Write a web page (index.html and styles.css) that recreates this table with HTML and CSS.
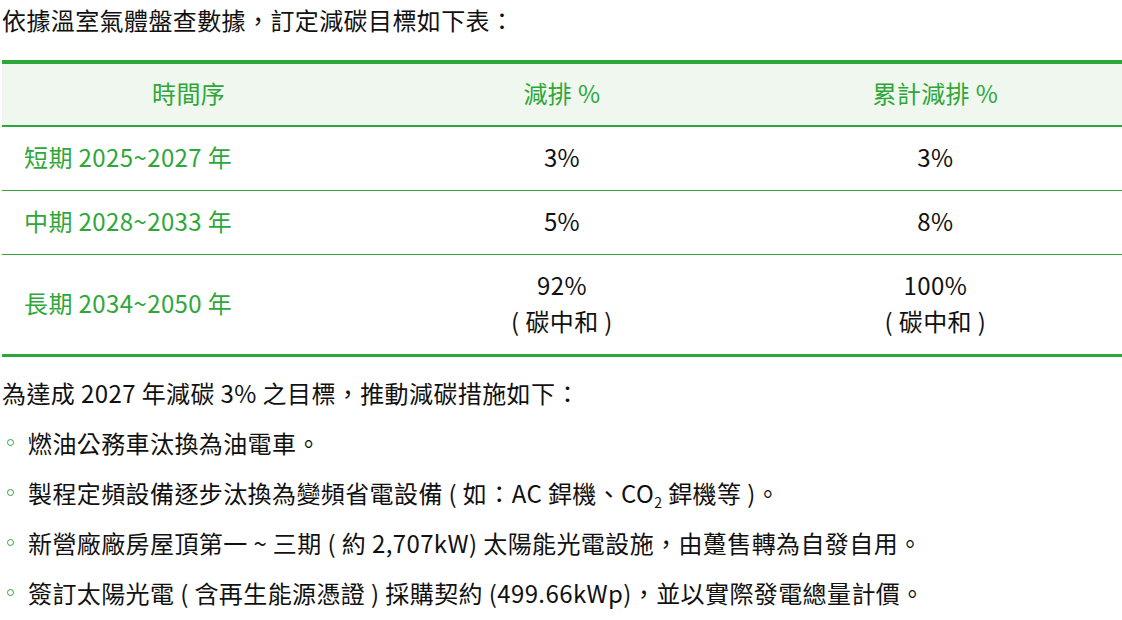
FILE: index.html
```html
<!DOCTYPE html>
<html lang="zh-Hant">
<head>
<meta charset="utf-8">
<link rel="stylesheet" href="styles.css">
</head>
<body>
<div class="content">
  <p class="intro">依據溫室氣體盤查數據，訂定減碳目標如下表：</p>
  <table class="goal-table">
    <thead>
      <tr><th>時間序</th><th>減排 %</th><th>累計減排 %</th></tr>
    </thead>
    <tbody>
      <tr><td class="period">短期 2025~2027 年</td><td>3%</td><td>3%</td></tr>
      <tr><td class="period">中期 2028~2033 年</td><td>5%</td><td>8%</td></tr>
      <tr><td class="period">長期 2034~2050 年</td><td>92%<br>( 碳中和 )</td><td>100%<br>( 碳中和 )</td></tr>
    </tbody>
  </table>
  <p class="lead">為達成 2027 年減碳 3% 之目標，推動減碳措施如下：</p>
  <ul class="measures">
    <li>燃油公務車汰換為油電車。</li>
    <li>製程定頻設備逐步汰換為變頻省電設備 ( 如：AC 銲機、CO<sub>2</sub> 銲機等 )。</li>
    <li>新營廠廠房屋頂第一 ~ 三期 ( 約 2,707kW) 太陽能光電設施，由躉售轉為自發自用。</li>
    <li>簽訂太陽光電 ( 含再生能源憑證 ) 採購契約 (499.66kWp)，並以實際發電總量計價。</li>
  </ul>
</div>
</body>
</html>
```

FILE: styles.css
```css
html, body {
  margin: 0;
  padding: 0;
  background: #ffffff;
}
body {
  font-family: "Noto Sans CJK TC", "Noto Sans", sans-serif;
  font-size: 24px;
  line-height: 36px;
  letter-spacing: 0.4px;
  color: #111111;
}
.content {
  padding: 2px 0 0 2px;
}
.intro {
  margin: 0 0 22px;
}
.goal-table {
  width: 1120px;
  border-collapse: collapse;
  table-layout: fixed;
  border-top: 4px solid #2ea73a;
  border-bottom: 3px solid #2ea73a;
}
.goal-table th {
  background: #f0f7ee;
  color: #2ea73a;
  font-weight: 400;
  padding: 11px 10px 14px;
  border-bottom: 2px solid #2ea73a;
}
.goal-table td {
  padding: 12px 10px 15px;
  text-align: center;
  border-top: 1px solid #2ea73a;
}
.goal-table tbody tr:first-child td {
  border-top: none;
}
.goal-table td.period {
  text-align: left;
  padding-left: 22px;
  color: #2ea73a;
}
.lead {
  margin: 18px 0 0;
}
.measures {
  list-style: none;
  margin: 14px 0 0;
  padding: 0;
}
.measures li {
  position: relative;
  height: 36px;
  padding-left: 26px;
  margin-bottom: 14px;
}
.measures li::before {
  content: "";
  position: absolute;
  left: 5px;
  top: 14px;
  width: 5px;
  height: 5px;
  border: 1.2px solid #2ea73a;
  border-radius: 50%;
}
.measures sub {
  font-size: 14px;
  line-height: 0;
  vertical-align: -5px;
}
```
